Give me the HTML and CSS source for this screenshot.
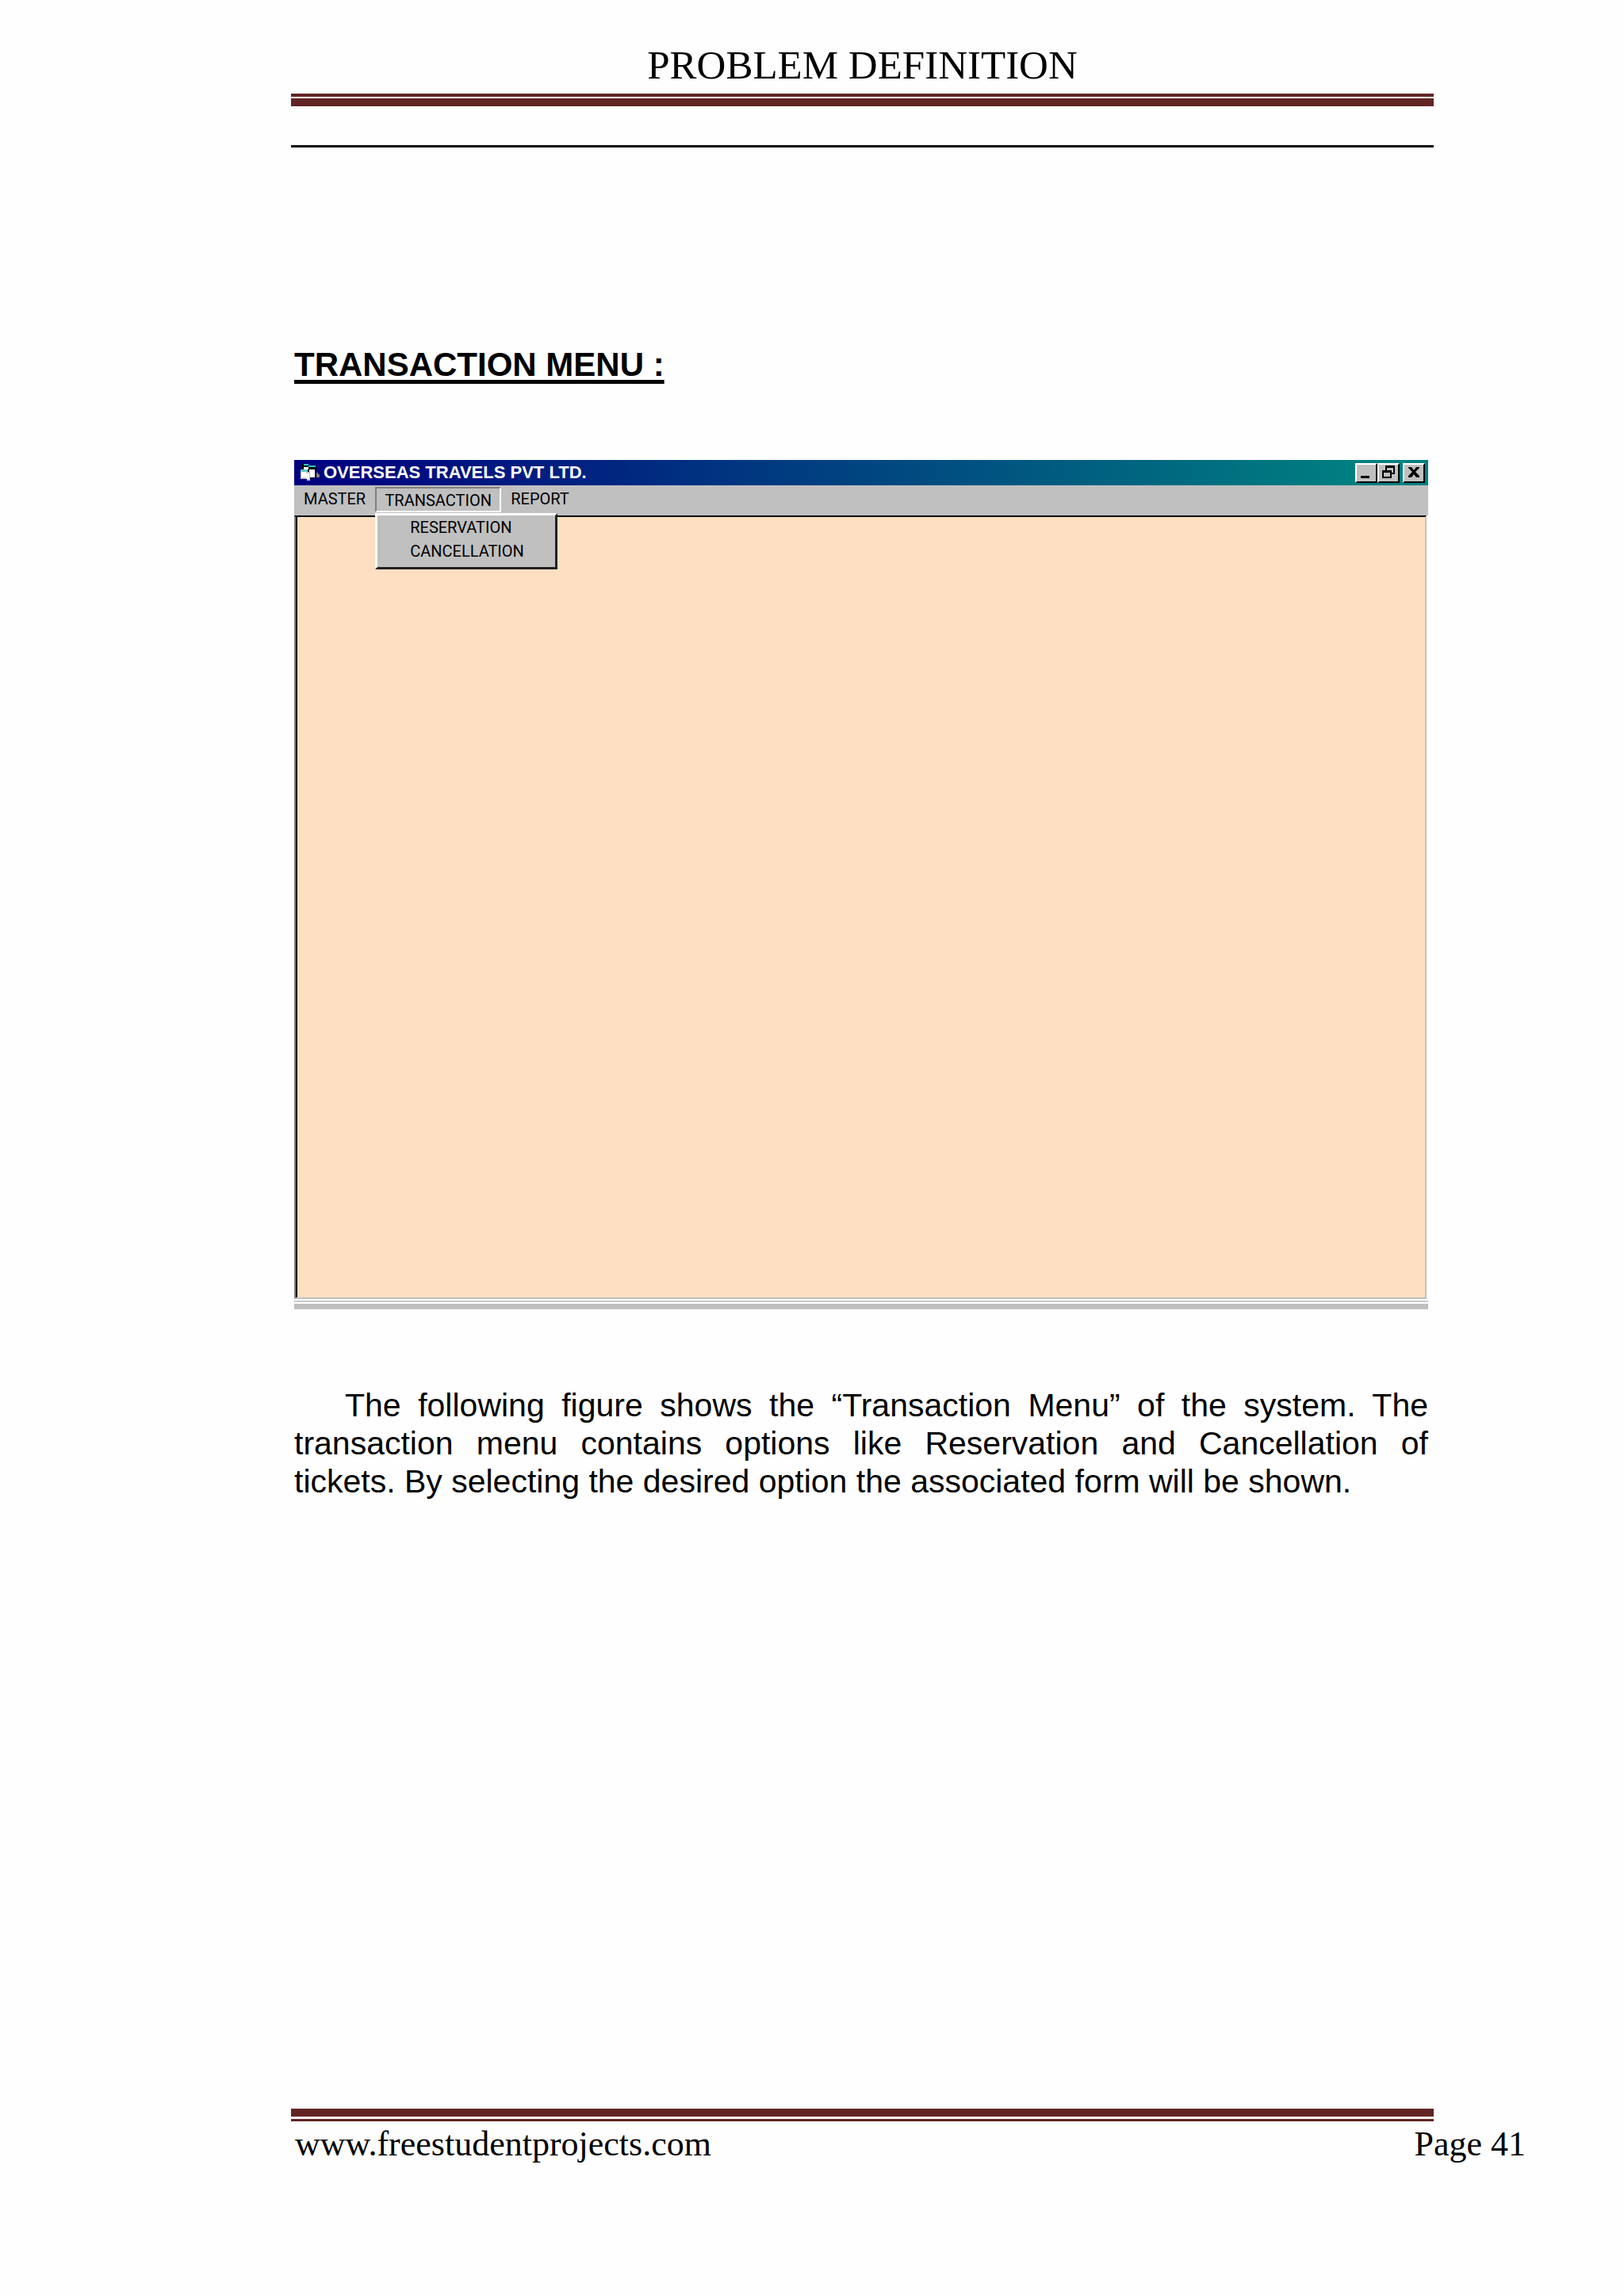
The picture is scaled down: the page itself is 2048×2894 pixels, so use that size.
FILE: index.html
```html
<!DOCTYPE html>
<html lang="en">
  <head>
    <meta charset="UTF-8">
    <meta name="viewport" content="width=device-width, initial-scale=1.0">
    <title>Problem Definition</title>
    <link rel="stylesheet" href="styles.css">
  </head>
  <body>
    <header class="page-header">
      <div class="page-title">PROBLEM DEFINITION</div>
      <div class="rule rule-header"></div>
      <hr class="line">
    </header>

    <main class="content">
      <h1>TRANSACTION MENU :</h1>

      <div class="window">
        <div class="titlebar">
          <svg class="app-icon" viewBox="0 0 24 24" aria-hidden="true">
            <path d="M3 1h2v2h8v2h8v14H10L3 12z" fill="#000"/>
            <path d="M5 1h6v2h9v2H11V3H5z" fill="#2cc8c8"/>
            <path d="M5 5h6v3H5zM12 8h7v10h-7z" fill="#fff"/>
            <path d="M21 12h2v2h2v4h-4z" fill="#808080"/>
            <path d="M1 8h9v3h3v11H9v-2H1z" fill="#c8c8d0"/>
            <path d="M2 11h6v2h4v7H8v-2H2z" fill="#fff"/>
            <path d="M1 8h9v3H3V10H1z" fill="#58c8c8"/>
          </svg>
          <span class="titlebar-text">OVERSEAS TRAVELS PVT LTD.</span>
          <div class="controls">
            <button type="button" aria-label="Minimize">
              <svg viewBox="0 0 24 20"><path d="M5 14h11v3H5z"/></svg>
            </button>
            <button type="button" aria-label="Restore">
              <svg viewBox="0 0 24 20"><path fill-rule="evenodd" d="M8 1h12v11h-4v5H4V7h4zM10 4v3h6v3h2V4zM6 10v5h8v-5z"/></svg>
            </button>
            <button type="button" class="close" aria-label="Close">
              <svg viewBox="0 0 24 20"><path d="M5 3h4l3 4 3-4h4v1l-5 5 5 5v2h-4l-3-4-3 4H5v-2l5-5-5-5z"/></svg>
            </button>
          </div>
        </div>
        <nav class="menubar">
          <button type="button">MASTER</button>
          <div class="menu">
            <button type="button" class="open" aria-expanded="true">TRANSACTION</button>
            <div class="dropdown">
              <button type="button">RESERVATION</button>
              <button type="button">CANCELLATION</button>
            </div>
          </div>
          <button type="button">REPORT</button>
        </nav>
        <div class="client"></div>
        <div class="window-bottom"></div>
      </div>

      <p>The following figure shows the “Transaction Menu” of the system. The transaction menu contains options like Reservation and Cancellation of tickets.&nbsp;By selecting the desired option the associated form will be shown.</p>
    </main>

    <footer class="page-footer">
      <div class="rule rule-footer"></div>
      <div class="footer-text">
        <a href="http://www.freestudentprojects.com">www.freestudentprojects.com</a>
        <span>Page 41</span>
      </div>
    </footer>
  </body>
</html>
```
FILE: styles.css
```css
* {
  box-sizing: border-box;
}
body {
  margin: 0;
  padding: 0 240px 0 367px;
  min-height: 100vh;
  display: flex;
  flex-direction: column;
  background: #fefefe;
  color: #000;
  font-family: "Liberation Sans", Arial, sans-serif;
}

/* header and footer */
.page-header {
  padding-top: 52px;
}
.page-title {
  font-family: "Liberation Serif", "Times New Roman", serif;
  font-size: 51px;
  line-height: 60px;
  text-align: center;
}
.rule {
  height: 16px;
  border: 0 solid #622423;
}
.rule-header {
  margin-top: 6px;
  border-top-width: 4px;
  border-bottom-width: 10px;
}
.rule-footer {
  border-top-width: 10px;
  border-bottom-width: 3px;
}
.line {
  height: 3px;
  margin: 49px 0 0;
  border: none;
  background: #000;
}
.page-footer {
  margin-top: auto;
  padding-bottom: 164px;
}
.footer-text {
  display: flex;
  justify-content: space-between;
  margin: 2px -116px 0 5px;
  font-family: "Liberation Serif", "Times New Roman", serif;
  font-size: 44px;
  line-height: 53px;
}
.footer-text a {
  color: inherit;
  text-decoration: none;
}

.content {
  padding: 0 7px 0 4px;
}
h1 {
  margin: 250px 0 96px;
  font-size: 42px;
  line-height: 48px;
  text-decoration: underline;
  text-decoration-thickness: 5px;
  text-underline-offset: 5px;
}
p {
  margin: 97px 0 0;
  font-size: 41px;
  line-height: 48px;
  text-align: justify;
  text-indent: 64px;
}

/* application window */
.window button {
  padding: 0;
  border: none;
  background: none;
  color: inherit;
  font: inherit;
}
.titlebar {
  display: flex;
  align-items: center;
  gap: 6px;
  height: 32px;
  padding: 0 4px 0 7px;
  background: linear-gradient(to right, #000080, #008080 94%);
  color: #fff;
  font-size: 22px;
  font-weight: bold;
}
.app-icon {
  width: 24px;
  height: 24px;
  overflow: visible;
}
.controls {
  display: flex;
  margin-left: auto;
}
.window .controls button {
  width: 28px;
  height: 25px;
  border: 2px solid;
  border-color: #fff #000 #000 #fff;
  background: #c0c0c0;
}
.window .controls .close {
  margin-left: 4px;
}
.controls svg {
  display: block;
  width: 24px;
  height: 20px;
}
.menubar {
  display: flex;
  align-items: flex-start;
  height: 38px;
  padding: 2px 0 0 12px;
  background: #c0c0c0;
  font-family: Roboto, "Liberation Sans", sans-serif;
  font-size: 20px;
  line-height: 30px;
}
.menu {
  position: relative;
  margin: 0 12px;
}
.window .open {
  width: 159px;
  height: 32px;
  border: 2px solid;
  border-color: #808080 #fff #fff #808080;
}
.dropdown {
  position: absolute;
  top: 33px;
  left: 0;
  width: 230px;
  height: 71px;
  padding: 0 0 0 41px;
  border: 3px solid;
  border-color: #fff #222 #222 #fff;
  background: #c0c0c0;
}
.window .dropdown button {
  display: block;
  line-height: 30px;
}
.client {
  aspect-ratio: 1428 / 988;
  margin-right: 2px;
  border: 2px solid;
  border-color: #000 #c0c0c0 #c0c0c0 #808080;
  background: #ffdfc2;
  box-shadow: inset 2px 0 #000;
}
.window-bottom {
  height: 13px;
  border-top: 2px solid #fff;
  background: linear-gradient(#c8c8c8 2px, #fff 2px, #fff 4px, #c0c0c0 4px);
}
```
